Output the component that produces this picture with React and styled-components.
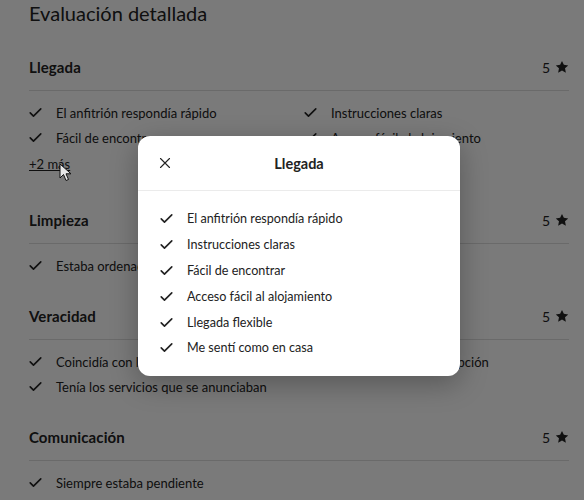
import React from 'react';
import styled, { createGlobalStyle } from 'styled-components';

const GlobalStyle = createGlobalStyle`
  html, body {
    margin: 0;
    padding: 0;
    background: #ffffff;
    overflow: hidden;
  }
  body {
    font-family: Lato, "Noto Sans", "Liberation Sans", sans-serif;
    color: #222222;
  }
`;

const Page = styled.div`
  position: relative;
  width: 584px;
  height: 500px;
  overflow: hidden;
`;

const Content = styled.div`
  padding: 0 15px 0 29px;
`;

const Title = styled.h2`
  margin: 0;
  margin-top: -2px;
  font-size: 20px;
  line-height: 30px;
  font-weight: 400;
  color: #222222;
`;

const Section = styled.section`
  margin-top: ${(p) => p.$top}px;
`;

const SectionHead = styled.div`
  display: flex;
  align-items: center;
  justify-content: space-between;
  height: 20px;
  padding-bottom: 13px;
  border-bottom: 1px solid #dddddd;
`;

const SectionName = styled.h3`
  margin: 0;
  font-size: 15px;
  font-weight: 700;
  letter-spacing: 0.1px;
`;

const Score = styled.div`
  display: flex;
  align-items: center;
  gap: 5px;
  font-size: 14px;
`;

const Items = styled.ul`
  list-style: none;
  margin: 0;
  padding: 9px 0 0;
  display: grid;
  grid-template-columns: 1fr 1fr;
  column-gap: 10px;
`;

const Item = styled.li`
  display: flex;
  align-items: center;
  gap: 14px;
  height: 25px;
  font-size: 13px;
  white-space: nowrap;
`;

const More = styled.a`
  display: inline-block;
  margin-top: 2px;
  font-size: 13px;
  line-height: 25px;
  color: #222222;
  text-decoration: underline;
`;

const Overlay = styled.div`
  position: absolute;
  inset: 0;
  background: rgba(0, 0, 0, 0.52);
`;

const Modal = styled.div`
  position: absolute;
  left: 138px;
  top: 136px;
  width: 322px;
  background: #ffffff;
  border-radius: 12px;
  box-shadow: 0 8px 28px rgba(0, 0, 0, 0.28);
`;

const ModalHeader = styled.div`
  display: grid;
  grid-template-columns: 40px 1fr 40px;
  align-items: center;
  height: 54px;
  padding: 0 17px;
  border-bottom: 1px solid #ebebeb;
`;

const CloseButton = styled.button`
  display: flex;
  align-items: center;
  justify-content: flex-start;
  padding: 0 0 0 4px;
  border: none;
  background: none;
  color: #222222;
`;

const ModalTitle = styled.h1`
  margin: 0;
  text-align: center;
  font-size: 14.5px;
  font-weight: 700;
`;

const ModalList = styled.ul`
  list-style: none;
  margin: 0;
  padding: 15px 22px 15px;
`;

const ModalItem = styled(Item)`
  height: 25.8px;
  font-size: 12.6px;
`;

const Cursor = styled.svg`
  position: absolute;
  left: 59px;
  top: 163px;
`;

const Check = () => (
  <svg width="13" height="13" viewBox="0 0 32 32" fill="none" stroke="#222" strokeWidth="4" strokeLinecap="round" strokeLinejoin="round">
    <path d="M3 17 L11 25 L29 7" />
  </svg>
);

const Star = () => (
  <svg width="14" height="14" viewBox="0 0 32 32" fill="#222">
    <path d="M16 2 l4.3 9.1 9.9 1.2 -7.3 6.8 1.9 9.8 -8.8-4.9 -8.8 4.9 1.9-9.8 -7.3-6.8 9.9-1.2 z" />
  </svg>
);

const Close = () => (
  <svg width="12" height="12" viewBox="0 0 32 32" fill="none" stroke="#222" strokeWidth="3" strokeLinecap="round">
    <path d="M4 4 L28 28 M28 4 L4 28" />
  </svg>
);

const sections = [
  {
    name: 'Llegada',
    top: 29,
    items: ['El anfitrión respondía rápido', 'Instrucciones claras', 'Fácil de encontrar', 'Acceso fácil al alojamiento'],
    more: '+2 más',
  },
  { name: 'Limpieza', top: 33, items: ['Estaba ordenado', 'Estaba limpio'] },
  {
    name: 'Veracidad',
    top: 28,
    items: ['Coincidía con las fotos', 'Coincidía con la descripción', 'Tenía los servicios que se anunciaban'],
  },
  { name: 'Comunicación', top: 28, items: ['Siempre estaba pendiente'] },
];

const modalItems = [
  'El anfitrión respondía rápido',
  'Instrucciones claras',
  'Fácil de encontrar',
  'Acceso fácil al alojamiento',
  'Llegada flexible',
  'Me sentí como en casa',
];

export default function App() {
  return (
    <Page>
      <GlobalStyle />
      <Content>
        <Title>Evaluación detallada</Title>
        {sections.map((s) => (
          <Section key={s.name} $top={s.top}>
            <SectionHead>
              <SectionName>{s.name}</SectionName>
              <Score>
                5 <Star />
              </Score>
            </SectionHead>
            <Items>
              {s.items.map((it) => (
                <Item key={it}>
                  <Check />
                  {it}
                </Item>
              ))}
            </Items>
            {s.more && <More>{s.more}</More>}
          </Section>
        ))}
      </Content>
      <Overlay />
      <Modal>
        <ModalHeader>
          <CloseButton>
            <Close />
          </CloseButton>
          <ModalTitle>Llegada</ModalTitle>
          <span />
        </ModalHeader>
        <ModalList>
          {modalItems.map((it) => (
            <ModalItem key={it}>
              <Check />
              {it}
            </ModalItem>
          ))}
        </ModalList>
      </Modal>
      <Cursor width="14" height="20" viewBox="0 0 14 20">
        <path d="M1 1 L1 15 L4.5 11.5 L7 17.5 L9.5 16.5 L7 10.8 L12 10.8 Z" fill="#e8e8e8" stroke="#111" strokeWidth="1" strokeLinejoin="round" />
      </Cursor>
    </Page>
  );
}
